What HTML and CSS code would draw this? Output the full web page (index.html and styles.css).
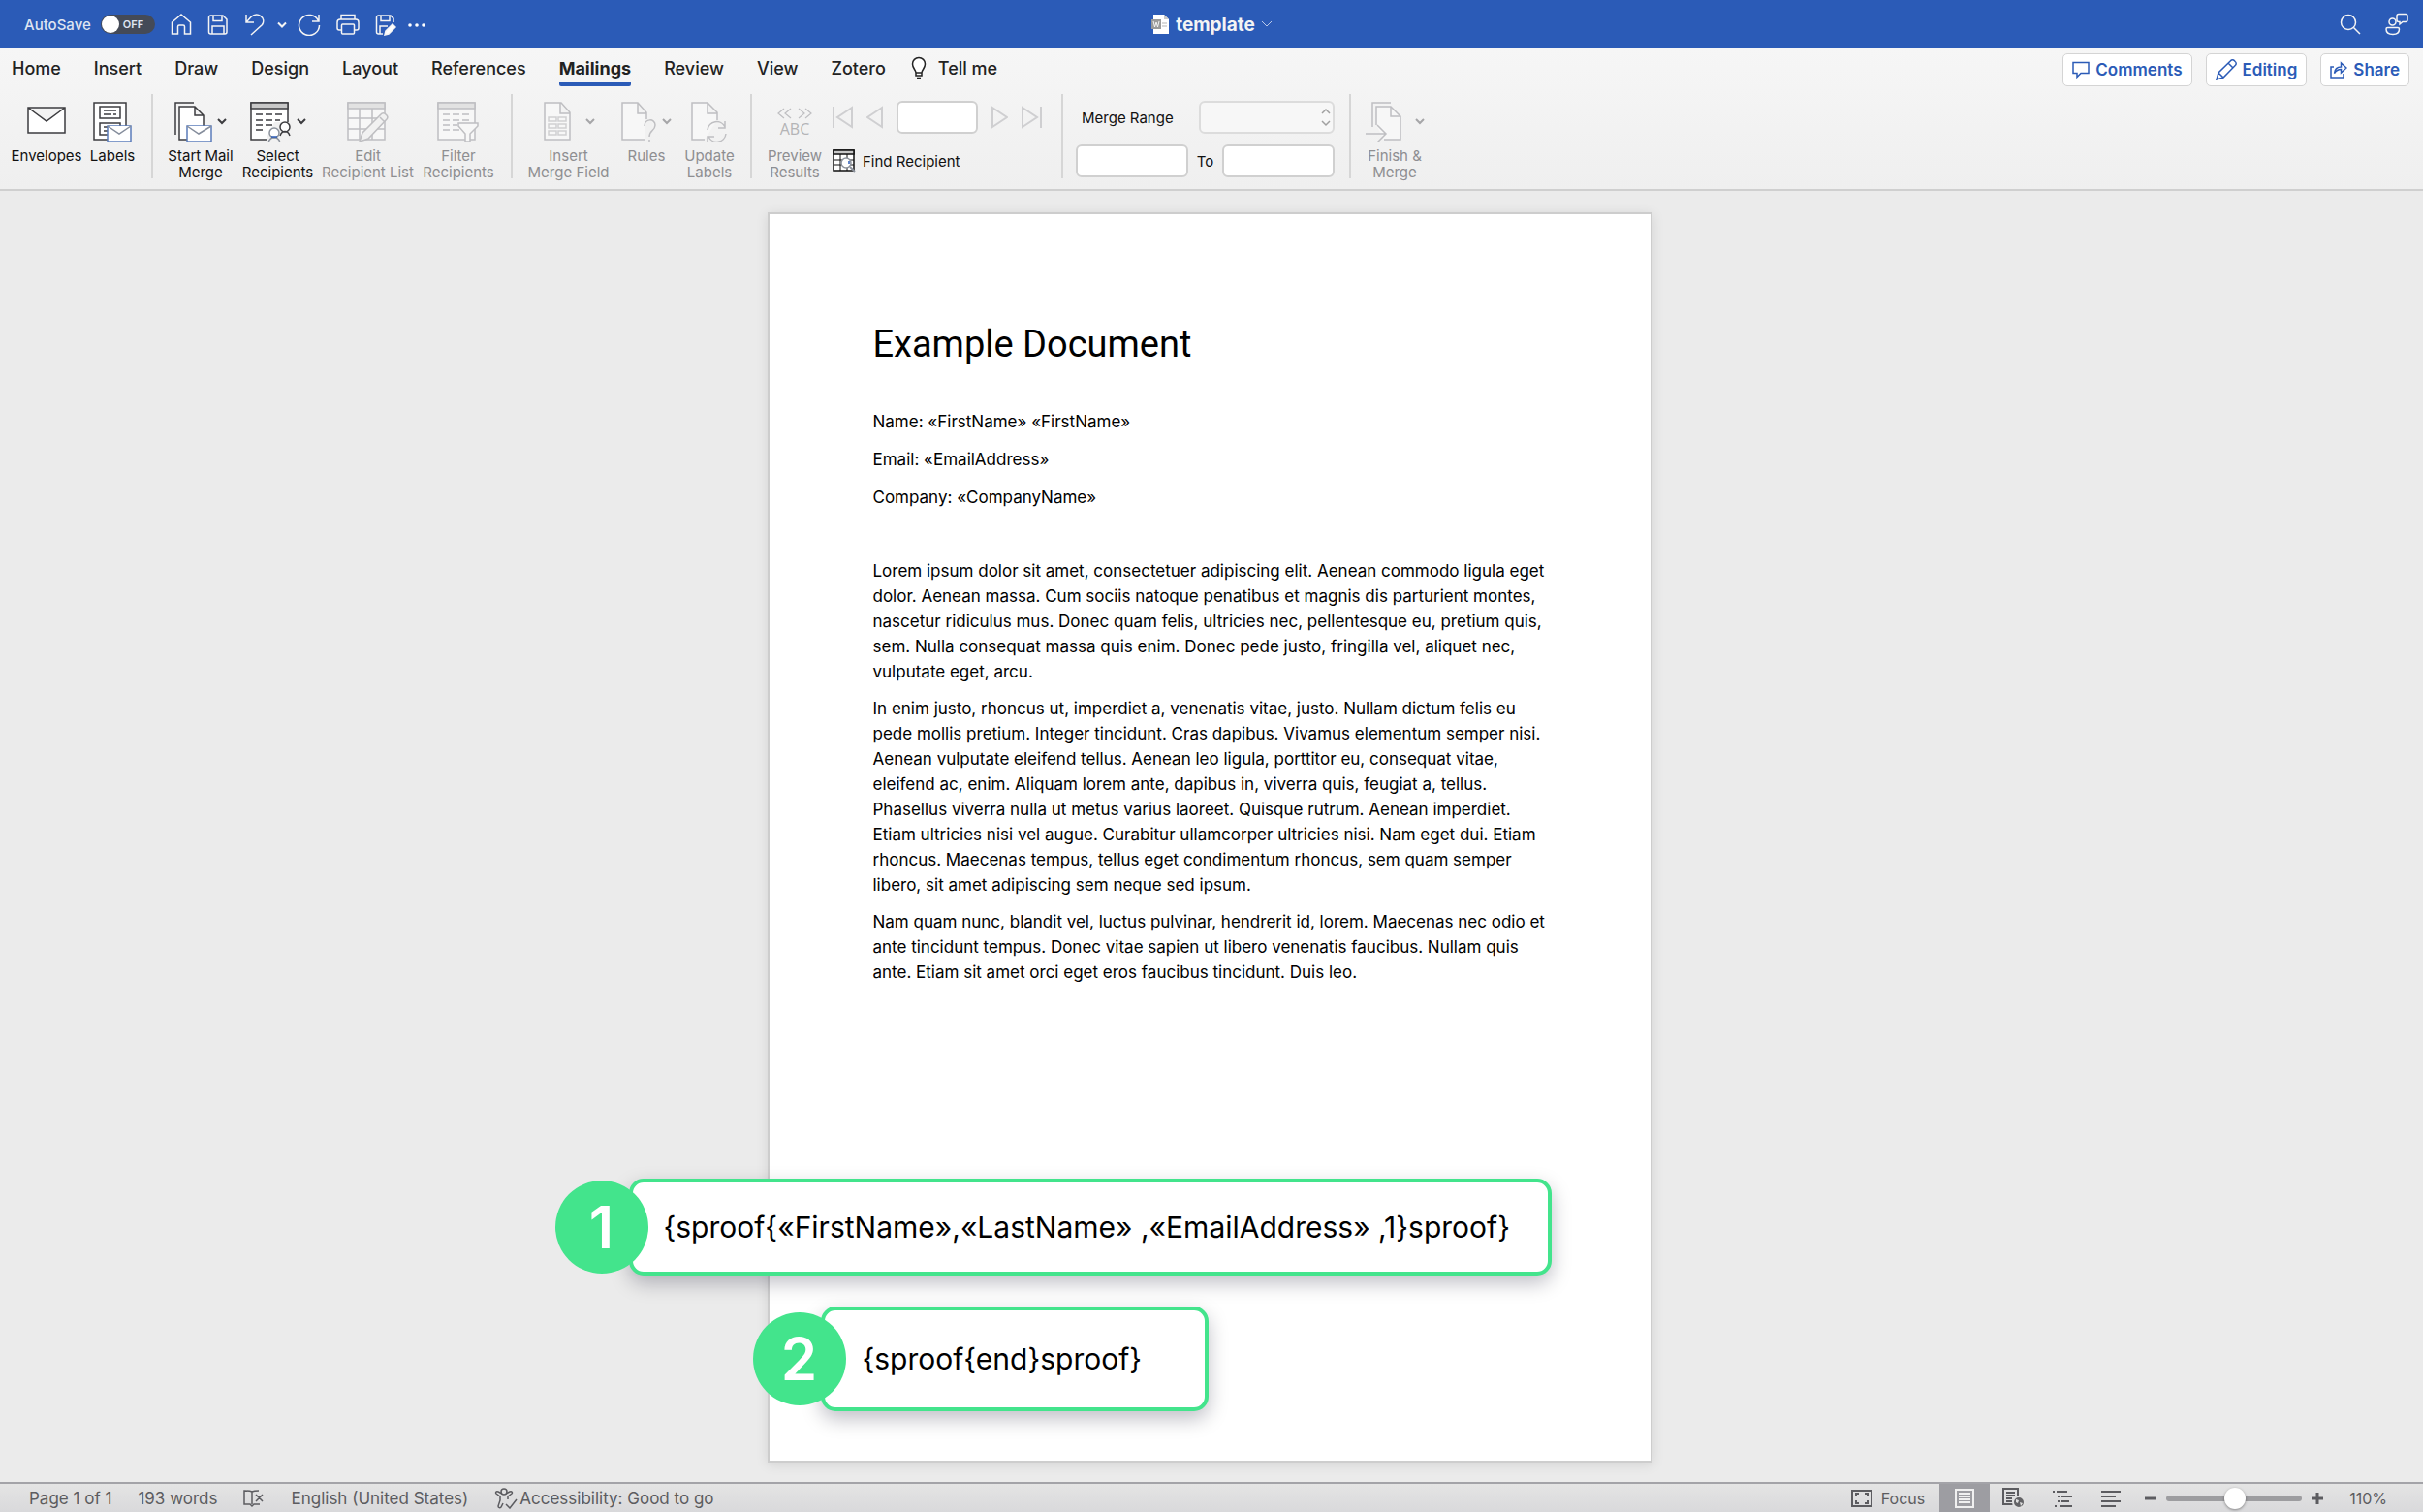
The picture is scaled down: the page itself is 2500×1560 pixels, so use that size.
FILE: index.html
```
<!DOCTYPE html>
<html lang="en">

<head>
  <meta charset="utf-8">
  <title>template</title>
  <link rel="stylesheet" href="styles.css">
</head>

<body>
  <header class="titlebar">
    <div class="quick">
      <label class="autosave">AutoSave
        <span class="switch"><input type="checkbox">OFF</span>
      </label>
      <button aria-label="Home"><svg width="22" height="24" viewBox="0 0 22 24"><path d="M1.5 10 11 2l9.5 8v12h-6v-7.500a1.500 1.500 0 0 0-1.500-1.500H9a1.500 1.500 0 0 0-1.500 1.500V22h-6z"/></svg></button>
      <button aria-label="Save"><svg width="22" height="24" viewBox="0 0 22 24"><path d="M3.500 3H16l4 4v13a2 2 0 0 1-2 2H3.500a2 2 0 0 1-2-2V5a2 2 0 0 1 2-2zM6 3v5.500h9V3M5 22v-8h12v8"/></svg></button>
      <button aria-label="Undo"><svg width="22" height="24" viewBox="0 0 22 24"><path d="M2 2v8h8M2.500 9.500 7 4.500c7-6 16 1 11.500 8L7 23"/></svg></button>
      <button class="tiny undo-menu" aria-label="Undo history"><svg width="10" height="24" viewBox="0 0 10 24"><path d="m1 10.500 4 4 4-4" stroke-width="2"/></svg></button>
      <button aria-label="Redo"><svg width="24" height="24" viewBox="0 0 24 24"><path d="M22 2v7h-7M21.500 8.500A10.500 10.500 0 1 0 22.500 13"/></svg></button>
      <button aria-label="Print"><svg width="24" height="24" viewBox="0 0 24 24"><path d="M5 7V2.500h14V7M5 18H3a2 2 0 0 1-2-2v-6a3 3 0 0 1 3-3h16a3 3 0 0 1 3 3v6a2 2 0 0 1-2 2h-2M6.500 12h11a1 1 0 0 1 1 1v8a1 1 0 0 1-1 1h-11a1 1 0 0 1-1-1v-8a1 1 0 0 1 1-1z"/></svg></button>
      <button aria-label="Save and edit"><svg width="22" height="24" viewBox="0 0 22 24"><path d="M8 22H3.500a2 2 0 0 1-2-2V5a2 2 0 0 1 2-2H16l3 3v4M6 3v5.500h9V3M5 22v-8h8"/><path d="m11 19 7-7 3 3-7 7-4 1z" fill="#fff"/></svg></button>
      <button class="tiny" aria-label="More commands"><svg width="18" height="24" viewBox="0 0 18 24"><g fill="#fff" stroke="none"><circle cx="2" cy="13" r="1.800"/><circle cx="9" cy="13" r="1.800"/><circle cx="16" cy="13" r="1.800"/></g></svg></button>
    </div>
    <button class="doc-name">
      <svg width="20" height="22" viewBox="0 0 20 22"><path d="M3 1h11l5 5v15H3z" fill="#fff" stroke="none"/><path d="M14 1v5h5z" fill="#c9c9c9" stroke="none"/><path d="M1 6h10v10H1z" fill="#9a9a9a" stroke="none"/><path d="m3 8 1.500 6L6 9l1.500 5L9 8" stroke-width="1"/><path d="M12 10h5M12 13h5" stroke="#b5b5b5" stroke-width="1"/></svg>
      template
      <svg width="12" height="8" viewBox="0 0 12 8"><path d="m1 1 5 5 5-5" stroke="#b9c8e8" stroke-width="1"/></svg>
    </button>
    <div class="title-right">
      <button aria-label="Search"><svg width="22" height="24" viewBox="0 0 22 24"><circle cx="9" cy="10" r="7.500"/><path d="m14.500 15.500 6.500 6.500"/></svg></button>
      <button aria-label="Presence"><svg width="24" height="24" viewBox="0 0 24 24"><circle cx="7.500" cy="9.500" r="3.500"/><path d="M2.500 15.500h10.500a1.500 1.500 0 0 1 1.500 1.500c0 4-3 5.500-6.500 5.500S1 21 1 17a1.500 1.500 0 0 1 1.500-1.500zM14 1.500h7a2 2 0 0 1 2 2v4a2 2 0 0 1-2 2h-3l-3 2.500V9.500h-1a2 2 0 0 1-2-2v-4a2 2 0 0 1 2-2z"/></svg></button>
    </div>
  </header>

  <section class="ribbon">
    <div class="tab-row">
      <nav class="tabs">
        <a href="#">Home</a>
        <a href="#">Insert</a>
        <a href="#">Draw</a>
        <a href="#">Design</a>
        <a href="#">Layout</a>
        <a href="#">References</a>
        <a href="#" class="active">Mailings</a>
        <a href="#">Review</a>
        <a href="#">View</a>
        <a href="#">Zotero</a>
        <a href="#" class="tell"><svg width="16" height="24" viewBox="0 0 16 24"><path d="M5 17c0-3-3.500-4.500-3.500-9a6.500 6.500 0 0 1 13 0c0 4.500-3.500 6-3.500 9zM5 17v3h6v-3M6 22.500h4" fill="#fff"/></svg>Tell me</a>
      </nav>
      <div class="actions">
        <button><svg width="18" height="18" viewBox="0 0 18 18"><path d="M1 1.500h16v11H9L5 16.500v-4H1z"/></svg>Comments</button>
        <button><svg width="22" height="22" viewBox="0 0 22 22"><path d="m1 21 2-7L15.500 1.800a2.500 2.500 0 0 1 4 0l.7.700a2.500 2.500 0 0 1 0 4L8 19zM13 4l5 5M3 14l5 5"/></svg>Editing</button>
        <button><svg width="18" height="18" viewBox="0 0 18 18"><path d="M4 6H1v11h13v-4M4.500 12.500C5 8 8 6 11.500 6V2l5.500 5-5.500 5V8.500c-3 0-5 1-7 4z"/></svg>Share</button>
      </div>
    </div>

    <div class="tools">
      <div class="group create">
        <button class="tool"><span class="icon"><svg width="40" height="44" viewBox="0 0 40 44"><path d="M1 8h38v26H1zM1 8l19 14L39 8" fill="#fff"/></svg></span>Envelopes</button>
        <button class="tool"><span class="icon"><svg width="40" height="44" viewBox="0 0 40 44"><path d="M1 3h33v38H1zM7 7h21v12H7zM7 24h21v12H7zM11 11h13M11 15h8M21 15h3M11 28h8M11 32h5" fill="#fff"/><g class="mail"><path d="M15 27h24v16H15z"/><path d="m15 27 12 8 12-8"/></g></svg></span>Labels</button>
      </div>

      <div class="group start">
        <button class="tool"><span class="icon"><svg width="40" height="44" viewBox="0 0 40 44"><path d="M1 36V3h19"/><path d="M5 7h16l9 9v25H5zM21 7v9h9" fill="#fff"/><g class="mail"><path d="M13 27h25v16H13z"/><path d="m13 27 12 8 13-8"/></g></svg><svg class="caret" width="10" height="8" viewBox="0 0 10 8"><path d="m1 2 4 4 4-4"/></svg></span>Start Mail<br>Merge</button>
        <button class="tool"><span class="icon"><svg width="44" height="44" viewBox="0 0 44 44"><path d="M1 3h38v38H1z" fill="#fff"/><path d="M1 3h38v6H1z" fill="#c8c8c8"/><path d="M6 15h7M16 15h7M26 15h7M6 21h7M16 21h7M26 21h5M6 26h7M16 26h7M6 31h7"/><path d="M18 44v-7l7-14h19v21z" fill="#f1f1f1" stroke="none"/><circle cx="36" cy="28" r="5" fill="#fff"/><path d="M31 37c2-6 8-6 10 0"/><g stroke="#8c929c"><circle cx="25" cy="34" r="5" fill="#fff"/><path d="M19 44c2-7 10-7 12 0"/><path d="M22 38h6" stroke="#2b5bb7"/></g></svg><svg class="caret" width="10" height="8" viewBox="0 0 10 8"><path d="m1 2 4 4 4-4"/></svg></span>Select<br>Recipients</button>
        <button class="tool" disabled><span class="icon"><svg width="44" height="44" viewBox="0 0 44 44"><path d="M1 3h38v38H1z" fill="#f7f7f7"/><path d="M1 3h38v6H1z" fill="#e2e2e2"/><path d="M1 19h38M1 30h38M13 9v32M26 9v32"/><path d="m13 43 3-9 19-19a3 3 0 0 1 5 0l1 1a3 3 0 0 1 0 4L22 40zM34 18l5 5" fill="#f1f1f1"/></svg></span>Edit<br>Recipient List</button>
        <button class="tool" disabled><span class="icon"><svg width="44" height="44" viewBox="0 0 44 44"><path d="M1 3h38v38H1z" fill="#f7f7f7"/><path d="M1 3h38v6H1z" fill="#e2e2e2"/><path d="M6 15h7M16 15h7M26 15h7M6 21h7M16 21h7M26 21h7M6 26h7M16 26h5M6 31h7M16 31h7"/><path d="M22 24h20v3l-8 8v8h-5v-8l-7-8z" fill="#f7f7f7"/></svg></span>Filter<br>Recipients</button>
      </div>

      <div class="group fields">
        <button class="tool" disabled><span class="icon"><svg width="30" height="44" viewBox="0 0 30 44"><path d="M2 3h17l9 10v28H2zM18 3v11h10" fill="#f7f7f7"/><path d="M6 18h8v4H6zM16 18h8v4h-8zM6 25h8v4H6zM16 25h8v4h-8zM6 32h8v4H6zM16 32h8v4h-8z" opacity=".7"/></svg><svg class="caret far" width="10" height="8" viewBox="0 0 10 8"><path d="m1 2 4 4 4-4"/></svg></span>Insert<br>Merge Field</button>
        <button class="tool" disabled><span class="icon"><svg width="38" height="44" viewBox="0 0 38 44"><path d="M26 41H1V3h16l9 10v8M17 3v11h9" fill="#f7f7f7"/><path d="M24 42h8V20h-8z" fill="#f1f1f1" stroke="none"/><path d="M24 27c0-8 11-8 11-1 0 6-6 5-6 12M29 41v3"/></svg><svg class="caret" width="10" height="8" viewBox="0 0 10 8"><path d="m1 2 4 4 4-4"/></svg></span>Rules</button>
        <button class="tool" disabled><span class="icon"><svg width="38" height="44" viewBox="0 0 38 44"><path d="M14 41H1V3h16l10 10v8M17 3v11h10" fill="#f7f7f7"/><path d="M17 31a9.500 9.500 0 0 1 18-3M35 22v7h-7M36 35a9.500 9.500 0 0 1-18 3M17 44v-6h7"/></svg></span>Update<br>Labels</button>
      </div>

      <div class="group preview">
        <button class="tool" disabled><span class="icon"><svg width="38" height="44" viewBox="0 0 38 44"><path d="m8 9-6 5 6 5M15 9l-6 5 6 5M23 9l6 5-6 5M30 9l6 5-6 5" stroke-width="1.200"/><text x="19" y="36" text-anchor="middle">ABC</text></svg></span>Preview<br>Results</button>
        <div class="stack">
          <div class="record">
            <button disabled aria-label="First record"><svg width="22" height="24" viewBox="0 0 22 24"><path d="M1 1v22M20 2v20L5 12z"/></svg></button>
            <button disabled aria-label="Previous record"><svg width="18" height="24" viewBox="0 0 18 24"><path d="M16 2v20L1 12z"/></svg></button>
            <input type="text" class="number" aria-label="Record number">
            <button disabled aria-label="Next record"><svg width="18" height="24" viewBox="0 0 18 24"><path d="M2 2v20l15-10z"/></svg></button>
            <button disabled aria-label="Last record"><svg width="22" height="24" viewBox="0 0 22 24"><path d="M21 1v22M2 2v20l15-10z"/></svg></button>
          </div>
          <button class="find"><svg width="24" height="24" viewBox="0 0 24 24"><path d="M1 1h21v21H1z" fill="#fff"/><path d="M1 1h21v4H1z" fill="#c8c8c8"/><path d="M1 11h21M1 16h21M8 5v17M15 5v17" stroke-width="1"/><circle cx="14" cy="14" r="5" fill="#fff" stroke="#8c929c"/><path d="m18 18 5 5" stroke="#8c929c" stroke-width="2"/><path d="M17 12v3" stroke="#2b5bb7"/></svg>Find Recipient</button>
        </div>
      </div>

      <div class="group range">
        <div class="range-row">
          <label for="range">Merge Range</label>
          <span class="select"><select id="range"><option></option></select><svg width="10" height="20" viewBox="0 0 10 20"><path d="m1 6 4-4 4 4M1 14l4 4 4-4"/></svg></span>
        </div>
        <div class="range-row">
          <input type="text" aria-label="From">
          <label for="to">To</label>
          <input type="text" id="to">
        </div>
      </div>

      <div class="group finish">
        <button class="tool" disabled><span class="icon"><svg width="38" height="44" viewBox="0 0 38 44"><path d="M8 28V3h19"/><path d="M12 26V7h15l10 10v24H20" fill="#f7f7f7"/><path d="M27 7v10h10"/><path d="M1 35h20M13 26l9 9-9 9"/></svg><svg class="caret far" width="10" height="8" viewBox="0 0 10 8"><path d="m1 2 4 4 4-4"/></svg></span>Finish &amp;<br>Merge</button>
      </div>
    </div>
  </section>

  <main class="workspace">
    <article class="page">
      <h1>Example Document</h1>
      <div class="fields-list">
        <p>Name: «FirstName» «FirstName»</p>
        <p>Email: «EmailAddress»</p>
        <p>Company: «CompanyName»</p>
      </div>
      <p>Lorem ipsum dolor sit amet, consectetuer adipiscing elit. Aenean commodo ligula eget<br>
        dolor. Aenean massa. Cum sociis natoque penatibus et magnis dis parturient montes,<br>
        nascetur ridiculus mus. Donec quam felis, ultricies nec, pellentesque eu, pretium quis,<br>
        sem. Nulla consequat massa quis enim. Donec pede justo, fringilla vel, aliquet nec,<br>
        vulputate eget, arcu.</p>
      <p>In enim justo, rhoncus ut, imperdiet a, venenatis vitae, justo. Nullam dictum felis eu<br>
        pede mollis pretium. Integer tincidunt. Cras dapibus. Vivamus elementum semper nisi.<br>
        Aenean vulputate eleifend tellus. Aenean leo ligula, porttitor eu, consequat vitae,<br>
        eleifend ac, enim. Aliquam lorem ante, dapibus in, viverra quis, feugiat a, tellus.<br>
        Phasellus viverra nulla ut metus varius laoreet. Quisque rutrum. Aenean imperdiet.<br>
        Etiam ultricies nisi vel augue. Curabitur ullamcorper ultricies nisi. Nam eget dui. Etiam<br>
        rhoncus. Maecenas tempus, tellus eget condimentum rhoncus, sem quam semper<br>
        libero, sit amet adipiscing sem neque sed ipsum.</p>
      <p>Nam quam nunc, blandit vel, luctus pulvinar, hendrerit id, lorem. Maecenas nec odio et<br>
        ante tincidunt tempus. Donec vitae sapien ut libero venenatis faucibus. Nullam quis<br>
        ante. Etiam sit amet orci eget eros faucibus tincidunt. Duis leo.</p>

      <div class="callout first"><span class="step">1</span>{sproof{«FirstName»,«LastName» ,«EmailAddress» ,1}sproof}</div>
      <div class="callout second"><span class="step">2</span>{sproof{end}sproof}</div>
    </article>
  </main>

  <footer class="statusbar">
    <div class="status-left">
      <span>Page 1 of 1</span>
      <span>193 words</span>
      <svg width="22" height="20" viewBox="0 0 22 20"><path d="M9 3v13M9 3C7 2 4 2 1 2v14h6l2 2 2-2h6M9 3c2-1 4-1 7-1M13 6l7 7M20 6l-7 7"/></svg>
      <span>English (United States)</span>
      <span class="access"><svg width="24" height="22" viewBox="0 0 24 22"><circle cx="10" cy="4" r="3"/><path d="M8 6 4 4C2 3 1 5 2 6l4 3v4l-2 6c0 2 2 2 3 1l2-4M12 6l4-2c2-1 3 1 2 2l-4 3v3M12 17l4 4 7-9"/></svg>Accessibility: Good to go</span>
    </div>
    <div class="status-right">
      <button class="focus"><svg width="22" height="18" viewBox="0 0 22 18"><path d="M1 1h20v16H1zM5 7V4h3M14 4h3v3M17 11v3h-3M8 14H5v-3"/></svg>Focus</button>
      <button class="view active" aria-label="Print layout"><svg width="20" height="20" viewBox="0 0 20 20"><path d="M1 1h18v18H1zM4 5h12M4 8h12M4 11h12M4 14h12"/></svg></button>
      <button class="view" aria-label="Web layout"><svg width="24" height="22" viewBox="0 0 24 22"><path d="M13 17H1V1h15v7M4 5h9M4 8h9M4 11h6M4 14h6"/><circle cx="17" cy="15" r="6" fill="#636366" stroke="#e0e0e0"/><path d="m14 12 3 1-1 3-2-1zM18 15l3 1-2 3z" fill="#e0e0e0" stroke="none"/></svg></button>
      <button class="view" aria-label="Outline"><svg width="22" height="18" viewBox="0 0 22 18"><path d="M1 2h2M5 2h11M6 7h2M10 7h11M6 12h2M10 12h8M3 17h2M8 17h13"/></svg></button>
      <button class="view" aria-label="Draft"><svg width="20" height="18" viewBox="0 0 20 18"><path d="M0 2h20M0 7h15M0 12h20M0 17h15"/></svg></button>
      <button class="zoom-btn" aria-label="Zoom out"><svg width="12" height="12" viewBox="0 0 12 12"><path d="M0 6h12" stroke-width="3"/></svg></button>
      <input type="range" min="0" max="100" value="51" aria-label="Zoom">
      <button class="zoom-btn" aria-label="Zoom in"><svg width="12" height="12" viewBox="0 0 12 12"><path d="M0 6h12M6 0v12" stroke-width="3"/></svg></button>
      <span class="percent">110%</span>
    </div>
  </footer>
</body>

</html>
```
FILE: styles.css
```
* {
  box-sizing: border-box;
}

body {
  margin: 0;
  min-height: 100vh;
  display: flex;
  flex-direction: column;
  font-family: Inter, "Liberation Sans", sans-serif;
  background: #ebebeb;
  color: #111;
}

button {
  border: none;
  background: none;
  padding: 0;
  font: inherit;
  color: inherit;
}

svg {
  display: block;
  flex: none;
  fill: none;
  stroke: currentColor;
  stroke-width: 1.5;
}

/* title bar */
.titlebar {
  display: grid;
  grid-template-columns: 1fr auto 1fr;
  align-items: center;
  height: 50px;
  background: #2b5bb7;
  color: #f4f4f4;
}

.quick {
  display: flex;
  align-items: center;
  gap: 16px;
  padding-left: 25px;
}

.quick .tiny {
  margin-left: -4px;
}

.quick .undo-menu {
  margin-right: -5px;
}

.autosave {
  display: flex;
  align-items: center;
  gap: 10px;
  font-size: 15px;
  font-weight: 500;
  color: #dfe5f2;
}

.switch {
  display: flex;
  align-items: center;
  gap: 4px;
  width: 56px;
  height: 20px;
  padding: 0 1px;
  border-radius: 10px;
  background: #444a57;
  font-size: 11px;
  font-weight: 600;
}

.switch input {
  appearance: none;
  width: 18px;
  height: 18px;
  margin: 0;
  border-radius: 50%;
  background: #fff;
}

.doc-name {
  display: flex;
  align-items: center;
  gap: 6px;
  font-size: 19px;
  font-weight: 700;
}

.title-right {
  display: flex;
  justify-content: flex-end;
  gap: 25px;
  padding-right: 15px;
}

/* ribbon */
.ribbon {
  background: linear-gradient(#f6f6f6, #efefef);
  border-bottom: 2px solid #cfcfcf;
}

.tab-row {
  display: flex;
  justify-content: space-between;
  height: 47px;
}

.tabs {
  display: flex;
  align-items: flex-start;
  gap: 34px;
  padding: 8px 0 0 12px;
}

.tabs a {
  height: 31px;
  line-height: 25px;
  font-size: 18px;
  font-weight: 500;
  color: #222;
  text-decoration: none;
}

.tabs .active {
  font-weight: 700;
  border-bottom: 4px solid #2b5bb7;
  border-radius: 2px;
}

.tabs .tell {
  display: flex;
  gap: 12px;
  margin-left: -8px;
}

.actions {
  display: flex;
  gap: 14px;
  padding: 5px 14px 0 0;
}

.actions button {
  display: flex;
  align-items: center;
  gap: 6px;
  height: 34px;
  padding: 0 9px;
  border: 1px solid #d4d4d4;
  border-radius: 5px;
  background: #fff;
  color: #2b5bb7;
  font-size: 17px;
  font-weight: 600;
}

.tools {
  display: flex;
  height: 98px;
  padding-bottom: 11px;
  font-size: 15px;
  line-height: 17px;
}

.group {
  display: grid;
  column-gap: 9px;
  border-right: 2px solid #d6d6d6;
}

.create {
  grid-template-columns: 72px 46px;
  padding: 0 17px 0 12px;
}

.start {
  grid-template-columns: 68px 73px 95px 74px;
  padding: 0 17px 0 15px;
}

.fields {
  grid-template-columns: 81px 72px 50px;
  padding: 0 17px;
  column-gap: 4px;
}

.preview {
  grid-template-columns: 54px 216px;
  column-gap: 12px;
  padding: 0 20px 0 17px;
}

.finish {
  grid-template-columns: 60px;
  border: none;
  padding-left: 15px;
}

.tool {
  display: flex;
  flex-direction: column;
  align-items: center;
  text-align: center;
  white-space: nowrap;
  color: #111;
}

.tool svg {
  color: #3d3d40;
}

.tool:disabled {
  color: #8e8e91;
}

.tool:disabled svg {
  color: #bfbfc2;
}

.tool text {
  fill: #b4b4b6;
  stroke: none;
  font-family: "Open Sans", sans-serif;
  font-size: 16px;
}

.icon {
  display: flex;
  align-items: center;
  gap: 4px;
  height: 55px;
}

.icon .far {
  margin-left: 10px;
}

.caret {
  stroke-width: 2;
}

.tool:disabled .caret {
  color: #a6a6a8;
}

.mail path {
  fill: #fff;
  stroke: #858d9c;
}

.mail path:first-child {
  stroke: #5b7cba;
}

.stack,
.range {
  display: flex;
  flex-direction: column;
  gap: 12px;
  padding-top: 7px;
}

.record {
  display: flex;
  justify-content: space-between;
  align-items: center;
  color: #cfcfd1;
}

.record svg {
  stroke-width: 2;
}

input[type="text"],
select {
  min-width: 0;
  width: 116px;
  height: 34px;
  border: 2px solid #d0d0d0;
  border-radius: 6px;
  background: #fff;
}

.record .number {
  width: 84px;
}

.find {
  display: flex;
  align-items: center;
  gap: 7px;
  height: 32px;
}

.range {
  padding: 7px 15px 0 13px;
  gap: 11px;
}

.range-row {
  display: flex;
  align-items: center;
  justify-content: space-between;
  width: 267px;
}

.range-row label:first-child {
  padding-left: 6px;
}

.select {
  position: relative;
}

.select select {
  display: block;
  width: 140px;
  appearance: none;
  border-color: #dcdcdc;
  background: #f7f7f7;
}

.select svg {
  position: absolute;
  right: 4px;
  top: 7px;
  color: #a0a0a0;
  pointer-events: none;
}

/* document */
.workspace {
  flex: 1;
  padding: 22px 4px 20px 0;
}

.page {
  position: relative;
  width: 913px;
  min-height: 1290px;
  margin: 0 auto;
  padding: 104px 107px;
  border: 2px solid #cdcdcd;
  background: #fff;
  box-shadow: 0 2px 12px rgba(0, 0, 0, 0.1);
  font-family: Inter, sans-serif;
  font-size: 17px;
  line-height: 26px;
  white-space: nowrap;
  color: #000;
}

.page h1 {
  margin: 0 0 37px;
  font-family: Roboto, sans-serif;
  font-size: 38px;
  font-weight: 400;
  line-height: 60px;
}

.page p {
  margin: 0 0 12px;
}

.page .fields-list p {
  margin-bottom: 13px;
}

.page .fields-list {
  margin-bottom: 50px;
}

.callout {
  position: absolute;
  display: flex;
  align-items: center;
  border: 4px solid #43e48c;
  border-radius: 15px;
  background: #fff;
  box-shadow: 0 8px 20px rgba(0, 0, 30, 0.25);
  font-size: 30px;
}

.first {
  left: -145px;
  top: 995px;
  width: 952px;
  height: 100px;
  padding-left: 32px;
}

.second {
  left: 53px;
  top: 1127px;
  width: 400px;
  height: 108px;
  padding-left: 39px;
}

.step {
  position: absolute;
  left: -80px;
  width: 96px;
  height: 96px;
  border-radius: 50%;
  background: #43e48c;
  color: #fff;
  font-size: 60px;
  font-weight: 600;
  line-height: 96px;
  text-align: center;
}

.second .step {
  left: -74px;
}

/* status bar */
.statusbar {
  display: flex;
  justify-content: space-between;
  height: 31px;
  border-top: 2px solid #a3a3a8;
  background: linear-gradient(#e4e4e4, #d9d9db);
  color: #5c5c60;
  font-size: 16px;
}

.status-left,
.status-right {
  display: flex;
  align-items: center;
}

.status-left {
  gap: 27px;
  padding-left: 30px;
  font-size: 17px;
}

.access,
.focus {
  display: flex;
  align-items: center;
}

.access {
  gap: 2px;
}

.focus {
  gap: 9px;
  margin-right: 15px;
}

.status-right svg {
  stroke-width: 2;
}

.view {
  display: flex;
  align-items: center;
  justify-content: center;
  width: 50px;
  height: 29px;
}

.view.active {
  width: 52px;
  background: #9d9da2;
  color: #f0f0f0;
}

.zoom-btn {
  margin: 0 10px;
}

input[type="range"] {
  appearance: none;
  width: 140px;
  height: 6px;
  margin: 0;
  border-radius: 3px;
  background: #9d9da0;
}

input[type="range"]::-webkit-slider-thumb {
  appearance: none;
  width: 22px;
  height: 22px;
  border-radius: 50%;
  background: #fff;
  box-shadow: 0 1px 3px rgba(0, 0, 0, 0.4);
}

.percent {
  margin: 0 37px 0 17px;
}
```
